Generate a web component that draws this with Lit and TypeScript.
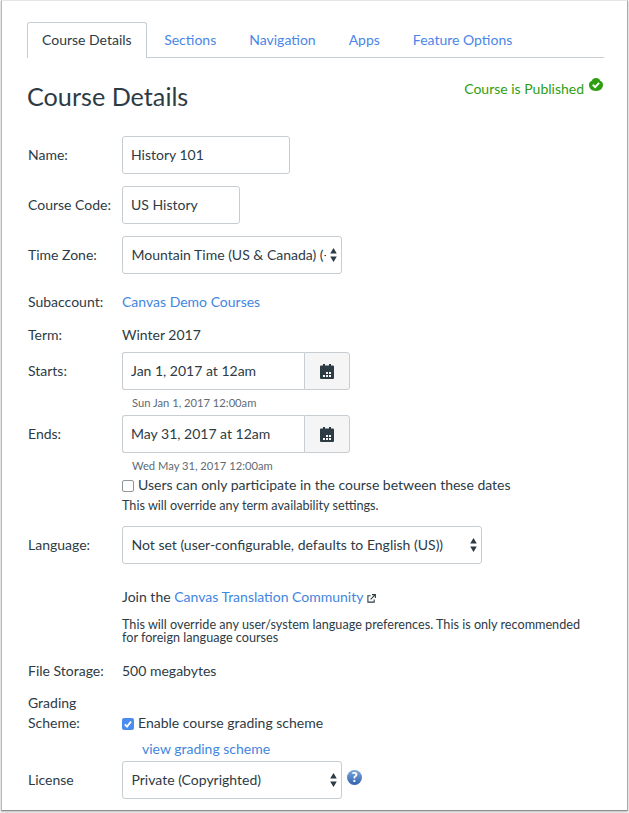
import { LitElement, html, css } from 'lit'
import { customElement } from 'lit/decorators.js'

const tabs = ['Sections', 'Navigation', 'Apps', 'Feature Options']

const calendarIcon = html`<svg class="cal" viewBox="0 0 14 16" width="14" height="16">
  <path fill="#2d3b45" fill-rule="evenodd" d="M1 2.500h2V1h2v1.500h4V1h2v1.500h2a1 1 0 0 1 1 1V15a1 1 0 0 1-1 1H1a1 1 0 0 1-1-1V3.500a1 1 0 0 1 1-1zM6 9v2h2V9zm3 0v2h2V9zM3 12v2h2v-2zm3 0v2h2v-2zm3 0v2h2v-2z"/>
</svg>`

const selectArrows = html`<svg class="arrows" viewBox="0 0 7 14" width="7" height="14">
  <path fill="#2d3b45" d="M3.500 0l3.300 5.600H.2zM3.500 14L.2 8.400h6.600z"/>
</svg>`

@customElement('app-root')
export class AppRoot extends LitElement {
  static styles = css`
    :host {
      display: block;
      width: 629px;
      height: 813px;
      overflow: hidden;
      background: #f8f8f8;
      font-family: Lato, sans-serif;
      font-size: 14px;
      color: #2d3b45;
    }
    * { box-sizing: border-box; }
    .page {
      width: 627px;
      height: 811px;
      margin-left: 1px;
      padding: 22px 23px 0 26px;
      background: #fff;
      border-left: 1px solid #b9b9b9;
      border-right: 1px solid #a9a9a9;
      border-top: 1px solid #e6e6e6;
      border-bottom: 1px solid #8e8e8e;
      box-shadow: 0 1px 2px rgba(0, 0, 0, .25);
    }
    a { color: #3f86e0; text-decoration: none; }
    label { padding-bottom: 2px; }
    .tabs {
      display: flex;
      height: 36px;
      margin: -1px 0 0 -1px;
      border-bottom: 1px solid #c7cdd1;
    }
    .tab {
      display: flex;
      align-items: center;
      padding: 0 16.500px 1px;
      color: #4a86e8;
    }
    .tab.active {
      height: 36px;
      margin-right: 1px;
      padding: 0 14px 2px 14px;
      background: #fff;
      color: #2d3b45;
      border: 1px solid #c7cdd1;
      border-bottom: 0;
      border-radius: 3px 3px 0 0;
    }
    .head {
      display: flex;
      justify-content: space-between;
      height: 78px;
      padding-top: 22px;
    }
    h1 {
      margin: 0 0 0 -1px;
      font-size: 25.200px;
      font-weight: 400;
      line-height: 32px;
    }
    .published {
      display: flex;
      align-items: flex-start;
      gap: 5px;
      margin-right: 1px;
      color: #2f9e12;
      line-height: 18px;
    }
    .published svg { margin-top: -2px; }
    .row {
      display: grid;
      grid-template-columns: 94px 1fr;
      align-items: center;
    }
    .row.top { align-items: start; }
    .field {
      display: block;
      height: 38px;
      padding: 0 8px 2px;
      border: 1px solid #c7cdd1;
      border-radius: 3px;
      background: #fff;
      color: #2d3b45;
      font: inherit;
      outline: none;
    }
    .w168 { width: 168px; }
    .w118 { width: 118px; }
    .mb12 { margin-bottom: 12px; }
    .select {
      position: relative;
      height: 38px;
    }
    .select select {
      width: 100%;
      appearance: none;
      padding: 0 15px 2px 8.500px;
    }
    .arrows {
      position: absolute;
      right: 5px;
      top: 12px;
      pointer-events: none;
    }
    .w220 { width: 220px; }
    .w360 { width: 360px; }
    .text { line-height: 20px; }
    .text label { padding-bottom: 0; }
    .date { display: flex; width: 228px; }
    .date .field {
      width: 182px;
      border-right: 0;
      border-radius: 3px 0 0 3px;
    }
    .date button {
      display: flex;
      align-items: center;
      justify-content: center;
      width: 46px;
      height: 38px;
      padding: 0 0 1px;
      background: #f5f5f5;
      border: 1px solid #c7cdd1;
      border-radius: 0 3px 3px 0;
    }
    .hint {
      height: 25px;
      padding: 6px 0 0 10px;
      font-size: 11.200px;
      line-height: 14px;
      color: #5f6b73;
    }
    .check {
      display: flex;
      align-items: center;
      gap: 4px;
      padding-bottom: 0;
      line-height: 20px;
    }
    .box {
      width: 12px;
      height: 12px;
      flex: none;
      margin: 1px 0 0;
      appearance: none;
      background: #fff;
      border: 1px solid #8d959a;
      border-radius: 2px;
    }
    .tick { flex: none; margin-top: 1px; }
    .note {
      font-size: 12.650px;
      line-height: 13px;
    }
    .ext { margin-left: 4px; vertical-align: -1px; }
    .view { display: block; margin: 6px 0 0 20px; line-height: 20px; }
    .license { display: flex; gap: 5px; }
    .help { margin-top: 9px; }
  `

  private renderInputRow(label: string, value: string, width: string) {
    return html`<div class="row mb12">
      <label>${label}</label>
      <input class="field ${width}" .value=${value} />
    </div>`
  }

  private renderDateRow(label: string, value: string, hint: string) {
    return html`<div class="row">
      <label>${label}</label>
      <div class="date">
        <input class="field" .value=${value} />
        <button>${calendarIcon}</button>
      </div>
    </div>
    <div class="row">
      <span></span>
      <div class="hint">${hint}</div>
    </div>`
  }

  private renderSelect(value: string, width: string) {
    return html`<div class="select ${width}">
      <select class="field"><option>${value}</option></select>
      ${selectArrows}
    </div>`
  }

  render() {
    return html`
      <div class="page">
        <nav class="tabs">
          <div class="tab active">Course Details</div>
          ${tabs.map(t => html`<a class="tab" href="#">${t}</a>`)}
        </nav>
        <div class="head">
          <h1>Course Details</h1>
          <div class="published">
            Course is Published
            <svg viewBox="0 0 14 14" width="14" height="14">
              <path fill="#2f9e12" d="M7 0c2.500 0 3.800 1.400 4.400 3 1.600.4 2.600 1.800 2.600 4 0 3-2.500 6-7 6S0 10 0 7c0-2.200 1-3.600 2.600-4C3.200 1.400 4.500 0 7 0z"/>
              <path fill="none" stroke="#fff" stroke-width="2" d="M3.800 6.800l2.300 2.300 4-4.200"/>
            </svg>
          </div>
        </div>

        ${this.renderInputRow('Name:', 'History 101', 'w168')}
        ${this.renderInputRow('Course Code:', 'US History', 'w118')}
        <div class="row" style="margin-bottom:18px">
          <label>Time Zone:</label>
          ${this.renderSelect('Mountain Time (US & Canada) (-07:00)', 'w220')}
        </div>
        <div class="row text" style="margin-bottom:13px">
          <label>Subaccount:</label>
          <a href="#">Canvas Demo Courses</a>
        </div>
        <div class="row text" style="margin-bottom:7px">
          <label>Term:</label>
          <span>Winter 2017</span>
        </div>
        ${this.renderDateRow('Starts:', 'Jan 1, 2017 at 12am', 'Sun Jan 1, 2017 12:00am')}
        ${this.renderDateRow('Ends:', 'May 31, 2017 at 12am', 'Wed May 31, 2017 12:00am')}
        <div class="row" style="margin-top:-3px">
          <span></span>
          <label class="check"><input type="checkbox" class="box" />Users can only participate in the course between these dates</label>
        </div>
        <div class="row" style="margin-bottom:9px">
          <span></span>
          <div class="note" style="line-height:22px">This will override any term availability settings.</div>
        </div>
        <div class="row" style="margin-bottom:23px">
          <label>Language:</label>
          ${this.renderSelect('Not set (user-configurable, defaults to English (US))', 'w360')}
        </div>
        <div class="row text" style="margin-bottom:11px">
          <span></span>
          <div>Join the <a href="#">Canvas Translation Community</a><svg class="ext" viewBox="0 0 10 10" width="9" height="9">
            <path fill="none" stroke="#2d3b45" stroke-width="1.200" d="M4 2H1v7h7V6M5.500 .7h3.800v3.800M9 1L4 6"/>
          </svg></div>
        </div>
        <div class="row" style="margin-bottom:17px">
          <span></span>
          <div class="note">This will override any user/system language preferences. This is only recommended<br />for foreign language courses</div>
        </div>
        <div class="row text" style="margin-bottom:12px">
          <label>File Storage:</label>
          <span>500 megabytes</span>
        </div>
        <div class="row top text">
          <label>Grading<br />Scheme:</label>
          <div>
            <div class="check" style="margin-top:20px">
              <svg class="tick" viewBox="0 0 12 12" width="12" height="12">
                <rect width="12" height="12" rx="2" fill="#4a8cf0"/>
                <path fill="none" stroke="#fff" stroke-width="1.800" d="M2.800 6.300l2.200 2.300 4-5"/>
              </svg>
              Enable course grading scheme
            </div>
            <a class="view" href="#">view grading scheme</a>
          </div>
        </div>
        <div class="row" style="margin-top:2px">
          <label>License</label>
          <div class="license">
            ${this.renderSelect('Private (Copyrighted)', 'w220')}
            <svg class="help" viewBox="0 0 16 16" width="15" height="15">
              <defs>
                <linearGradient id="helpFill" x1="0" y1="0" x2="0" y2="1">
                  <stop offset="0" stop-color="#7fa6da"/>
                  <stop offset="1" stop-color="#2f62ad"/>
                </linearGradient>
              </defs>
              <circle cx="8" cy="8" r="8" fill="url(#helpFill)"/>
              <text x="8" y="13" text-anchor="middle" font-family="Lato, sans-serif" font-size="14" font-weight="900" fill="#fff">?</text>
            </svg>
          </div>
        </div>
      </div>
    `
  }
}
